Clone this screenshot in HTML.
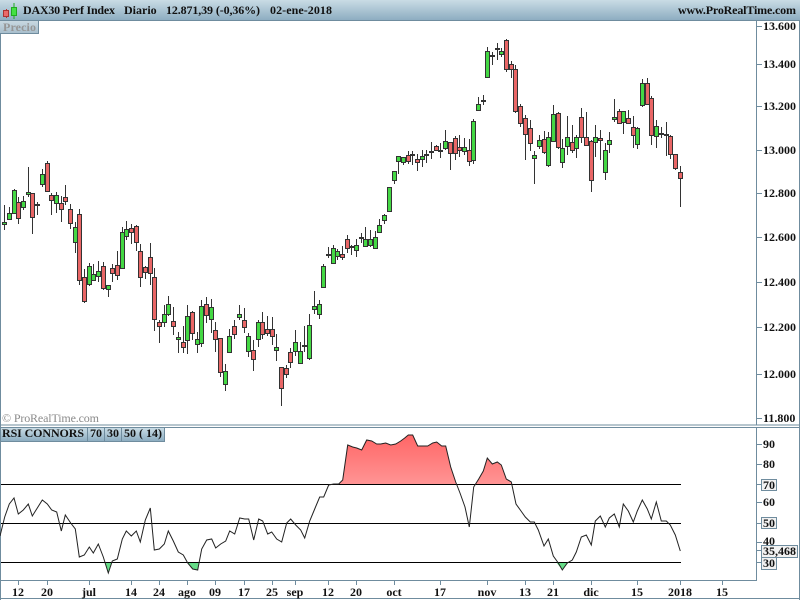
<!DOCTYPE html>
<html><head><meta charset="utf-8"><title>DAX30</title>
<style>
html,body{margin:0;padding:0;background:#fff;width:800px;height:600px;overflow:hidden}
svg{display:block}
text{font-family:"Liberation Serif",serif;font-size:12px;font-weight:bold;fill:#111}
</style></head><body>
<svg width="800" height="600" viewBox="0 0 800 600" xmlns="http://www.w3.org/2000/svg">
<defs>
<linearGradient id="h" x1="0" y1="0" x2="0" y2="1"><stop offset="0" stop-color="#c9dce5"/><stop offset="1" stop-color="#8dadc1"/></linearGradient>
<linearGradient id="p" x1="0" y1="0" x2="0" y2="1"><stop offset="0" stop-color="#c8d8e1"/><stop offset="1" stop-color="#a6bdcb"/></linearGradient>
<linearGradient id="r" gradientUnits="userSpaceOnUse" x1="0" y1="435" x2="0" y2="484"><stop offset="0" stop-color="#ff6666"/><stop offset="1" stop-color="#ff9494"/></linearGradient>
</defs>
<rect width="800" height="600" fill="#fff"/>
<!-- header -->
<rect x="0" y="0" width="800" height="20" fill="url(#h)"/>
<path d="M0 20.500H800" stroke="#6f8c9e"/>
<path d="M6.500 9V18" stroke="#b33"/>
<path d="M14 3V19" stroke="#2a2"/>
<rect x="3.500" y="10.500" width="5" height="6" fill="#ea6a6a" stroke="#a33"/>
<rect x="11.500" y="7.500" width="5" height="8" fill="#44e044" stroke="#2a2"/>
<text x="23" y="14" textLength="92" lengthAdjust="spacing">DAX30 Perf Index</text>
<text x="124" y="14">Diario</text>
<text x="166" y="14" textLength="94" lengthAdjust="spacing">12.871,39 (-0,36%)</text>
<text x="270" y="14" textLength="62" lengthAdjust="spacing">02-ene-2018</text>
<text x="678" y="14" textLength="118" lengthAdjust="spacing">www.ProRealTime.com</text>
<!-- frames -->
<path d="M0.500 20V600" stroke="#6f8c9e"/>
<path d="M756.500 20V425M756.500 427V580" stroke="#6f8c9e"/>
<path d="M0 425H800M0 427.500H800M0 580.500H757M0 598.500H800M799.500 20V600" stroke="#6f8c9e" fill="none" stroke-width="1"/>
<!-- precio -->
<rect x="0" y="21" width="39" height="13" fill="url(#p)"/>
<path d="M0 33.500H39M38.500 21V34" stroke="#6f8c9e" fill="none"/>
<text x="3" y="31" textLength="33" lengthAdjust="spacing" style="fill:#969696">Precio</text>
<!-- price axis -->
<path d="M757 26.500h5M757 64.500h5M757 106.500h5M757 150.500h5M757 193.500h5M757 237.500h5M757 282.500h5M757 327.500h5M757 374.500h5M757 418.500h5" stroke="#6f8c9e"/>
<g>
<text x="763" y="30">13.600</text><text x="763" y="68">13.400</text><text x="763" y="110">13.200</text><text x="763" y="154">13.000</text><text x="763" y="197">12.800</text><text x="763" y="241">12.600</text><text x="763" y="286">12.400</text><text x="763" y="331">12.200</text><text x="763" y="378">12.000</text><text x="763" y="422">11.800</text>
</g>
<text x="2" y="422" textLength="97" lengthAdjust="spacing" style="font-weight:normal;fill:#8a8a8a;font-size:12px">© ProRealTime.com</text>
<!-- wicks -->
<path fill="none" stroke="#333" d="M4.500 205V230M9.500 207V219M14.500 189V213M18.500 197V224M23.500 196V210M28.500 167V197M32.500 193V234M37.500 202V215M42.500 169V187M47.500 161V191M51.500 193V215M56.500 192V213M61.500 196V222M65.500 185V205M70.500 204V229M75.500 222V253M79.500 209V285M84.500 269V303M89.500 263V286M93.500 264V281M98.500 261V282M103.500 262V290M108.500 285V297M112.500 264V282M117.500 251V280M122.500 227V268M126.500 221V240M131.500 224V244M136.500 225V251M140.500 244V287M145.500 266V279M150.500 243V285M154.500 268V331M159.500 320V343M164.500 305V327M168.500 296V316M173.500 307V335M178.500 332V353M183.500 326V353M187.500 305V354M192.500 311V340M197.500 332V353M201.500 300V347M206.500 297V323M211.500 299V333M215.500 322V352M220.500 338V377M225.500 364V391M229.500 329V353M234.500 320V339M239.500 305V320M244.500 308V333M248.500 333V357M253.500 340V371M258.500 320V347M262.500 312V339M267.500 316V336M272.500 317V345M276.500 334V361M281.500 367V406M286.500 365V378M290.500 348V368M295.500 330V356M300.500 342V364M304.500 326V352M309.500 314V360M314.500 291V314M319.500 300V319M323.500 264V288M328.500 247V258M333.500 245V264M337.500 249V260M342.500 246V260M347.500 235V253M351.500 245V255M356.500 239V257M361.500 233V243M365.500 227V246M370.500 230V247M375.500 231V249M379.500 219V233M384.500 214V224M389.500 187V212M394.500 171V184M398.500 156V174M403.500 157V165M408.500 151V164M412.500 151V165M417.500 154V171M422.500 150V167M426.500 150V163M431.500 142V159M436.500 145V151M440.500 143V158M445.500 130V150M450.500 142V170M455.500 136V160M459.500 135V157M464.500 138V155M469.500 139V166M473.500 119V164M478.500 97V111M483.500 95V105M487.500 47V78M492.500 52V65M497.500 43V60M501.500 48V57M506.500 39V72M511.500 61V78M515.500 65V113M520.500 104V127M525.500 115V160M530.500 120V151M534.500 151V184M539.500 135V149M544.500 131V154M548.500 132V167M553.500 105V142M558.500 112V149M562.500 139V168M567.500 116V155M572.500 125V153M576.500 135V158M581.500 108V143M586.500 112V146M591.500 140V192M595.500 125V157M600.500 130V160M605.500 143V180M609.500 132V153M614.500 99V122M619.500 109V124M623.500 111V134M628.500 110V124M633.500 116V148M637.500 127V149M642.500 79V107M647.500 78V104M651.500 96V145M656.500 120V148M661.500 127V138M666.500 122V156M670.500 135V159M675.500 154V170M680.500 166V207"/>
<!-- doji -->
<path fill="none" stroke="#333" stroke-width="2" d="M35 205h5M302 346h5M326 255h5M349 247h5M359 238h5M410 155h5M424 155h5M429 152h5M438 151h5M481 101h5M490 56h5M495 49h5M659 134h5M664 135h5"/>
<!-- green bodies -->
<path fill="#44d844" stroke="#333" d="M2.500 222.500h4V224.500h-4zM7.500 213.500h4V219.500h-4zM12.500 190.500h4V213.500h-4zM21.500 201.500h4V207.500h-4zM26.500 192.500h4V194.500h-4zM40.500 174.500h4V184.500h-4zM54.500 195.500h4V203.500h-4zM73.500 227.500h4V242.500h-4zM87.500 266.500h4V284.500h-4zM91.500 274.500h4V280.500h-4zM96.500 271.500h4V276.500h-4zM106.500 285.500h4V289.500h-4zM120.500 232.500h4V268.500h-4zM124.500 229.500h4V236.500h-4zM162.500 314.500h4V322.500h-4zM166.500 304.500h4V314.500h-4zM176.500 337.500h4V339.500h-4zM185.500 316.500h4V340.500h-4zM195.500 339.500h4V344.500h-4zM199.500 306.500h4V343.500h-4zM209.500 307.500h4V319.500h-4zM223.500 371.500h4V384.500h-4zM227.500 336.500h4V352.500h-4zM237.500 314.500h4V317.500h-4zM246.500 336.500h4V351.500h-4zM256.500 322.500h4V339.500h-4zM274.500 347.500h4V350.500h-4zM293.500 342.500h4V351.500h-4zM298.500 351.500h4V363.500h-4zM307.500 325.500h4V358.500h-4zM312.500 306.500h4V309.500h-4zM317.500 304.500h4V314.500h-4zM321.500 266.500h4V287.500h-4zM331.500 248.500h4V263.500h-4zM335.500 251.500h4V256.500h-4zM354.500 245.500h4V250.500h-4zM363.500 239.500h4V246.500h-4zM368.500 239.500h4V245.500h-4zM373.500 237.500h4V248.500h-4zM377.500 225.500h4V232.500h-4zM382.500 215.500h4V220.500h-4zM387.500 187.500h4V211.500h-4zM392.500 171.500h4V180.500h-4zM396.500 156.500h4V161.500h-4zM401.500 157.500h4V162.500h-4zM420.500 156.500h4V159.500h-4zM443.500 141.500h4V148.500h-4zM462.500 147.500h4V151.500h-4zM471.500 121.500h4V160.500h-4zM476.500 104.500h4V110.500h-4zM485.500 51.500h4V77.500h-4zM499.500 51.500h4V54.500h-4zM532.500 155.500h4V158.500h-4zM537.500 140.500h4V146.500h-4zM546.500 137.500h4V165.500h-4zM551.500 114.500h4V141.500h-4zM560.500 148.500h4V162.500h-4zM565.500 137.500h4V146.500h-4zM574.500 137.500h4V148.500h-4zM593.500 137.500h4V142.500h-4zM603.500 150.500h4V172.500h-4zM607.500 140.500h4V144.500h-4zM612.500 117.500h4V119.500h-4zM621.500 111.500h4V122.500h-4zM635.500 128.500h4V144.500h-4zM640.500 83.500h4V105.500h-4zM654.500 126.500h4V136.500h-4z"/>
<!-- red bodies -->
<path fill="#e96666" stroke="#333" d="M16.500 202.500h4V218.500h-4zM30.500 193.500h4V217.500h-4zM45.500 163.500h4V191.500h-4zM49.500 195.500h4V200.500h-4zM59.500 203.500h4V209.500h-4zM63.500 197.500h4V201.500h-4zM68.500 209.500h4V223.500h-4zM77.500 214.500h4V280.500h-4zM82.500 277.500h4V301.500h-4zM101.500 266.500h4V288.500h-4zM110.500 268.500h4V273.500h-4zM115.500 265.500h4V275.500h-4zM129.500 228.500h4V232.500h-4zM134.500 226.500h4V242.500h-4zM138.500 251.500h4V277.500h-4zM143.500 267.500h4V272.500h-4zM148.500 257.500h4V273.500h-4zM152.500 277.500h4V319.500h-4zM157.500 322.500h4V326.500h-4zM171.500 321.500h4V326.500h-4zM181.500 342.500h4V347.500h-4zM190.500 312.500h4V333.500h-4zM204.500 304.500h4V315.500h-4zM213.500 330.500h4V339.500h-4zM218.500 338.500h4V372.500h-4zM232.500 326.500h4V334.500h-4zM242.500 320.500h4V327.500h-4zM251.500 350.500h4V359.500h-4zM260.500 322.500h4V334.500h-4zM265.500 329.500h4V333.500h-4zM270.500 329.500h4V336.500h-4zM279.500 367.500h4V388.500h-4zM284.500 368.500h4V374.500h-4zM288.500 352.500h4V362.500h-4zM340.500 254.500h4V257.500h-4zM345.500 239.500h4V248.500h-4zM406.500 155.500h4V161.500h-4zM415.500 159.500h4V162.500h-4zM434.500 146.500h4V150.500h-4zM448.500 142.500h4V153.500h-4zM453.500 138.500h4V153.500h-4zM457.500 147.500h4V150.500h-4zM467.500 150.500h4V161.500h-4zM504.500 40.500h4V69.500h-4zM509.500 64.500h4V69.500h-4zM513.500 69.500h4V111.500h-4zM518.500 106.500h4V123.500h-4zM523.500 118.500h4V134.500h-4zM528.500 128.500h4V143.500h-4zM542.500 139.500h4V152.500h-4zM556.500 113.500h4V147.500h-4zM570.500 142.500h4V150.500h-4zM579.500 117.500h4V137.500h-4zM584.500 137.500h4V145.500h-4zM589.500 141.500h4V180.500h-4zM598.500 138.500h4V140.500h-4zM617.500 111.500h4V123.500h-4zM626.500 118.500h4V123.500h-4zM631.500 127.500h4V135.500h-4zM645.500 83.500h4V104.500h-4zM649.500 98.500h4V135.500h-4zM668.500 136.500h4V154.500h-4zM673.500 154.500h4V168.500h-4zM678.500 172.500h4V178.500h-4z"/>
<!-- RSI label -->
<rect x="1" y="428" width="163" height="13" fill="url(#h)"/>
<path d="M87.500 428v13M104.500 428v13M121.500 428v13M164.500 428v13M1 441.500H165" stroke="#6f8c9e" fill="none"/>
<text x="2" y="437" textLength="82" lengthAdjust="spacing">RSI CONNORS</text>
<text x="90" y="437">70</text>
<text x="107" y="437">30</text>
<text x="124" y="437" textLength="38" lengthAdjust="spacing">50 ( 14)</text>
<!-- RSI fills -->
<path fill="url(#r)" d="M338.700 484L342.700 480L347.700 445L352.700 447L356.700 448L361.700 450L366.700 440L371.700 441L376.700 444L380.700 444L385.700 443L390.700 445L395.700 444L400.700 441L404.700 438L408.300 435L412.700 435L417.700 446L422.700 446L427.700 446L432.700 443L436.700 442L441.700 446L445.700 446L450.700 467L455.700 482L456.500 484ZM475 484L478.700 479L483.300 471L487.300 458L492.300 464L497.300 462L501.300 465L506.300 479L511.300 482L511.700 484Z"/>
<path fill="#66dd88" d="M104.500 562L108.300 573L112 562ZM187 562L192.700 569L197.700 570L199.200 562ZM556 562L562.300 570L569 562Z"/>
<!-- RSI levels -->
<path d="M1 484.500H681M1 523.500H681M1 562.500H681" stroke="#000" fill="none"/>
<!-- RSI curve -->
<polyline fill="none" stroke="#222" stroke-width="1" points="0,536 4.700,517 9.300,504 14,498 18.300,514 23.300,510 28.300,504 32.300,516 37.300,508 42.300,500 47.300,504 51.700,510 56.700,512 61.300,531 65.300,515 70.700,523 75.300,529 79.300,557 84.300,555 89.300,547 93.300,553 98.300,544 103.300,557 108.300,573 112.300,561 117.300,559 122.300,539 126.300,531 131.300,536 136.300,531 140.300,542 145.300,520 150.300,508 154.300,550 159.300,549 164.300,544 168.300,531 173.300,541 178.300,552 183.300,555 187.700,563 192.700,569 197.700,570 201.700,549 206.700,540 211.700,539 215.700,548 220.700,544 225.700,541 229.700,531 234.700,534 239.700,518 244.700,519 248.700,519 253.700,540 258.700,519 262.700,521 267.700,534 271.700,532 276.700,539 281.700,542 286.700,523 290.700,519 295.700,525 300.700,530 304.700,538 309.700,521 314.700,509 319.700,497 323.700,497 328.700,485 333.700,484 338.700,484 342.700,480 347.700,445 352.700,447 356.700,448 361.700,450 366.700,440 371.700,441 376.700,444 380.700,444 385.700,443 390.700,445 395.700,444 400.700,441 404.700,438 408.300,435 412.700,435 417.700,446 422.700,446 427.700,446 432.700,443 436.700,442 441.700,446 445.700,446 450.700,467 455.700,482 460,493 465,507 469.300,527 473.700,487 478.700,479 483.300,471 487.300,458 492.300,464 497.300,462 501.300,465 506.300,479 511.300,482 516,504 520.300,510 525.300,517 530.300,522 534.300,522 538.300,530 544,546 548.300,539 553.300,556 558.300,563 562.300,570 567.300,563 572.300,560 576.300,552 581.300,537 586.300,535 591.300,545 595.300,521 600.300,516 605.300,527 609.300,518 614.300,514 619.300,527 623.300,504 628.300,511 633.300,522 637.300,511 642.300,500 647.300,509 651.300,519 656.300,502 661.300,521 666.300,521 670.300,525 675.300,535 680.300,551"/>
<!-- RSI right axis -->
<path d="M757 444.500h5M757 464.500h5M757 484.500h5M757 502.500h5M757 523.500h5M757 542.500h5M757 550.500h5M757 562.500h5" stroke="#6f8c9e"/>
<text x="763" y="448">90</text>
<text x="763" y="468">80</text>
<text x="763" y="506">60</text>
<text x="763" y="545">40</text>
<g fill="#f2f2f2" stroke="#6f8c9e">
<rect x="761.500" y="479.500" width="15" height="11"/>
<rect x="761.500" y="517.500" width="15" height="11"/>
<rect x="761.500" y="545.500" width="36" height="12"/>
<rect x="761.500" y="557.500" width="15" height="12"/>
</g>
<text x="763" y="489">70</text>
<text x="763" y="527">50</text>
<text x="763" y="555">35,468</text>
<text x="763" y="567">30</text>
<!-- x axis -->
<path d="M18.500 581v4M47.500 581v4M89.500 581v4M131.500 581v4M159.500 581v4M187.500 581v4M215.500 581v4M244.500 581v4M272.500 581v4M295.500 581v4M328.500 581v4M356.500 581v4M394.500 581v4M440.500 581v4M487.500 581v4M525.500 581v4M553.500 581v4M591.500 581v4M637.500 581v4M680.500 581v4M722.500 581v4" stroke="#6f8c9e"/>
<g text-anchor="middle">
<text x="18" y="596">12</text><text x="47" y="596">20</text><text x="89" y="596">jul</text><text x="131" y="596">14</text><text x="159" y="596">24</text><text x="187" y="596">ago</text><text x="215" y="596">09</text><text x="244" y="596">17</text><text x="272" y="596">25</text><text x="295" y="596">sep</text><text x="328" y="596">12</text><text x="356" y="596">20</text><text x="394" y="596">oct</text><text x="440" y="596">17</text><text x="487" y="596">nov</text><text x="525" y="596">13</text><text x="553" y="596">21</text><text x="591" y="596">dic</text><text x="637" y="596">15</text><text x="680" y="596">2018</text><text x="722" y="596">15</text>
</g>
</svg>
</body></html>
